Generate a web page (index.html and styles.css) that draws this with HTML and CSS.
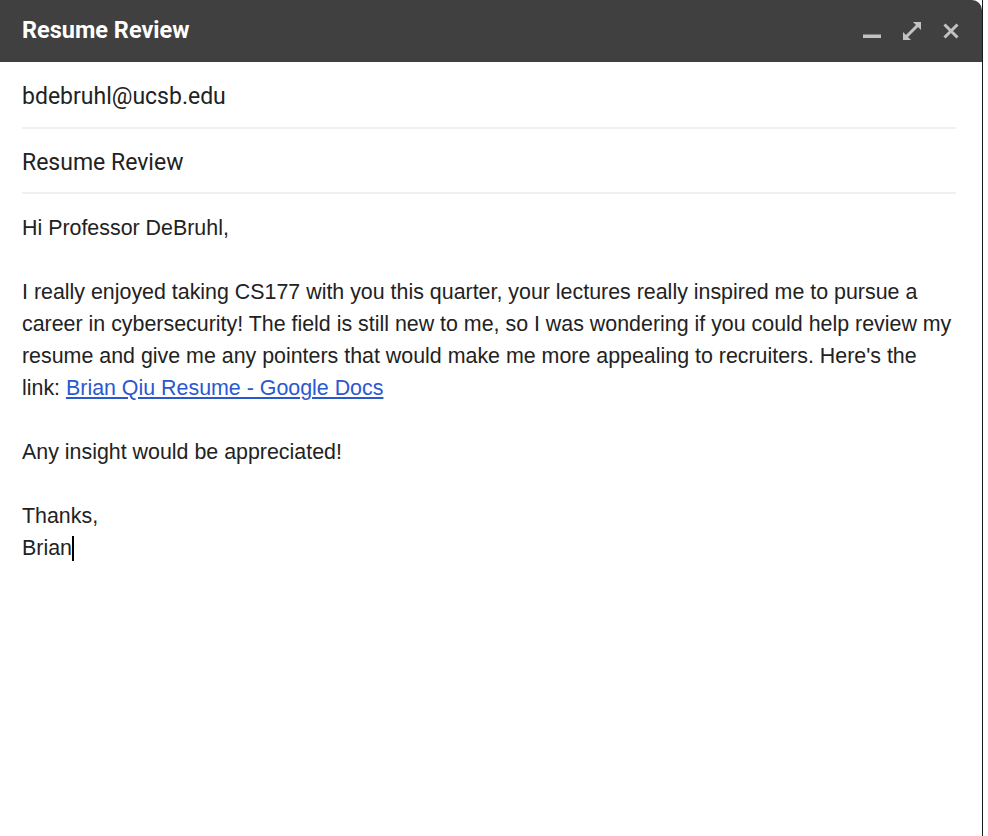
FILE: index.html
```html
<!DOCTYPE html>
<html>
<head>
<meta charset="utf-8">
<link rel="stylesheet" href="styles.css">
</head>
<body>
<div class="window">
  <div class="titlebar">
    <div class="title">Resume Review</div>
    <div class="controls">
      <svg class="ic" width="18" height="18" viewBox="0 0 18 18"><rect x="0" y="12.5" width="18" height="3.5" fill="#c2c2c2"/></svg>
      <svg class="ic" width="18" height="18" viewBox="0 0 18 18"><path d="M10 0h8v8z M0 10v8h8z" fill="#c2c2c2"/><path d="M3.5 14.5L14.5 3.5" stroke="#c2c2c2" stroke-width="3" fill="none"/></svg>
      <svg class="ic close" width="16" height="16" viewBox="0 0 16 16"><path d="M1.5 1.5l13 13M14.5 1.5l-13 13" stroke="#c2c2c2" stroke-width="3" fill="none"/></svg>
    </div>
  </div>
  <div class="field to">bdebruhl@ucsb.edu</div>
  <div class="field subject">Resume Review</div>
  <div class="body">
    <p>Hi Professor DeBruhl,</p>
    <p class="blank">&nbsp;</p>
    <p>I really enjoyed taking CS177 with you this quarter, your lectures really inspired me to pursue a career in cybersecurity! The field is still new to me, so I was wondering if you could help review my resume and give me any pointers that would make me more appealing to recruiters. Here's the link: <a href="#">Brian Qiu Resume - Google Docs</a></p>
    <p class="blank">&nbsp;</p>
    <p>Any insight would be appreciated!</p>
    <p class="blank">&nbsp;</p>
    <p>Thanks,</p>
    <p>Brian<span class="caret"></span></p>
  </div>
</div>
</body>
</html>
```
FILE: styles.css
```css
html, body {
  margin: 0;
  padding: 0;
  background: #fff;
}
.window {
  width: 982px;
  height: 836px;
  border-right: 1px solid #1a1a1a;
  background: #fff;
  box-sizing: content-box;
}
.titlebar {
  height: 62px;
  background: #404040;
  border-top-right-radius: 10px;
  display: flex;
  align-items: center;
  justify-content: space-between;
  padding: 0 23px 0 22px;
}
.title {
  font-family: Roboto, "Liberation Sans", sans-serif;
  font-weight: bold;
  font-size: 23.5px;
  color: #fff;
  margin-top: -2px;
}
.controls {
  display: flex;
  gap: 22px;
  align-items: center;
  margin-top: -1px;
}
.ic {
  display: block;
}
.ic.close {
  margin-top: 0;
}
.field {
  box-sizing: border-box;
  margin: 0 26px 0 22px;
  padding-top: 4px;
  font-family: Roboto, "Liberation Sans", sans-serif;
  font-size: 23px;
  color: #222;
  border-bottom: 2px solid #f0f0f0;
  display: flex;
  align-items: center;
}
.to {
  height: 67px;
}
.subject {
  height: 65px;
}
.body {
  padding: 18px 26px 0 22px;
  font-family: "Liberation Sans", Arial, sans-serif;
  font-size: 21.4px;
  line-height: 32px;
  color: #222;
}
.body p {
  margin: 0;
}
.body a {
  color: #2b58cf;
  text-decoration: underline;
}
.caret {
  display: inline-block;
  width: 2px;
  height: 25px;
  background: #000;
  vertical-align: -6px;
}
```
